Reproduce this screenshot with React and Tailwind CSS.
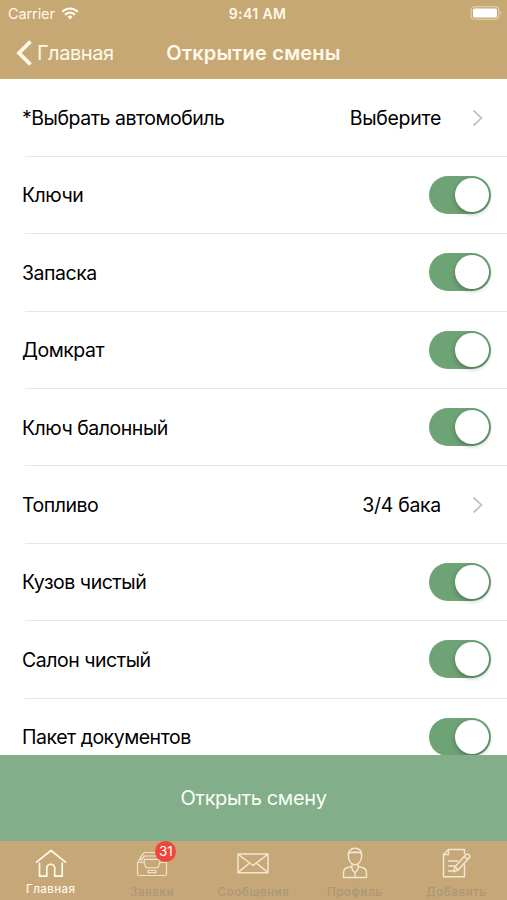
import React, { useState } from "react";
import clsx from "clsx";

const ROWS = [
    { label: "*Выбрать автомобиль", value: "Выберите" },
    { label: "Ключи" },
    { label: "Запаска" },
    { label: "Домкрат" },
    { label: "Ключ балонный" },
    { label: "Топливо", value: "3/4 бака" },
    { label: "Кузов чистый" },
    { label: "Салон чистый" },
    { label: "Пакет документов" },
];

// === Icons ===
const WifiIcon = () => (
    <svg width="18" height="13" viewBox="0 0 18 13" fill="none" stroke="#fffaf0" strokeWidth="2.1">
        <path d="M1.2 4.8C5.6.4 12.4.4 16.8 4.8" />
        <path d="M4 7.7c2.9-2.8 7.1-2.8 10 0" />
        <path d="M6.4 9.6a3.8 3.8 0 0 1 5.2 0L9 12.4z" fill="#fffaf0" stroke="none" />
    </svg>
);

const BatteryIcon = () => (
    <svg width="33" height="14" viewBox="0 0 33 14" fill="none">
        <rect x="1.2" y=".7" width="27.6" height="12.6" rx="3.2" stroke="#e3d3b4" strokeWidth="1.1" />
        <rect x="3" y="2.5" width="24" height="9" rx="1.5" fill="#fff" />
        <path d="M30.4 4.8c1.5.7 1.5 3.7 0 4.4z" fill="#e3d3b4" />
    </svg>
);

const HomeIcon = () => (
    <svg width="32" height="30" viewBox="0 0 32 30" fill="none" stroke="#fffaf0" strokeWidth="1.7" strokeLinecap="round" strokeLinejoin="round">
        <path d="M1.500 13.200 16 1.500l14.500 11.700" />
        <path d="M4.500 14v13.200h7.300v-8a3.700 3.700 0 0 1 7.900 0v8h7.500V14" />
    </svg>
);

const TrayIcon = () => (
    <svg width="32" height="26" viewBox="0 0 32 26" fill="none" stroke="#efe2ca" strokeWidth="1.200" strokeLinejoin="round" strokeLinecap="round">
        <path d="M1.500 11.500h5.800c.8 0 1.200.6 1.400 1.300l1 3c.2.700.6 1 1.300 1h10c.7 0 1.100-.3 1.300-1l1-3c.2-.7.6-1.300 1.400-1.300h5.800V23a1.500 1.500 0 0 1-1.500 1.500H3A1.500 1.500 0 0 1 1.500 23z" />
        <path d="M1.500 11.500 4.200 7.500M30.500 11.500l-2.700-4" />
        <path d="M4.200 9V6.500L8.500 1.500H25M5.800 10V8l2.800-3h15.800M8.300 10.700V8.300h15.400v2.400" />
        <path d="M12 19.500v2.200h8v-2.200M12 19.500h8" />
    </svg>
);

const MailIcon = () => (
    <svg width="32" height="21" viewBox="0 0 32 21" fill="none" stroke="#f3e7d3" strokeWidth="1.5" strokeLinejoin="round">
        <rect x="1" y="1" width="30" height="18.7" />
        <path d="m1.5 1.5 14.5 11 14.5-11M1.5 19.2l10.4-8.5M30.5 19.2l-10.4-8.5" />
    </svg>
);

const ProfileIcon = () => (
    <svg width="26" height="33" viewBox="0 0 26 33" fill="none" stroke="#f3e7d3" strokeWidth="1.4" strokeLinejoin="round" strokeLinecap="round">
        <path d="M6.3 8.2C6.3 3.7 9 1.2 13 1.2s6.700 2.500 6.700 7c0 6-3 9.500-6.700 9.500S6.300 14.200 6.300 8.200z" />
        <path d="M6.500 8c0-1.500 1-2.700 2.500-2.700h8c1.500 0 2.500 1.200 2.500 2.700M8 5.500h10" />
        <path d="M10 17v2.300L4.500 21C2.300 21.800 1.500 23.500 1.500 26v4.500h23V26c0-2.500-.8-4.200-3-5L16 19.300V17" />
        <path d="m9.500 19.500 1.200 4 2.300 2.300 2.300-2.300 1.200-4M13 26v4.500" />
    </svg>
);

const NoteIcon = () => (
    <svg width="30" height="31" viewBox="0 0 30 31" fill="none" stroke="#f3e7d3" strokeWidth="1.5" strokeLinejoin="round" strokeLinecap="round">
        <path d="M23.500 5.500v-4H7.500l-5 5v22.200h21V17" />
        <path d="M7.500 1.500v5h-5M7.500 13h9M7.500 18h6M7.500 23h4" />
        <path d="m12.500 23.700 1.500-5L25 6.500c1.500-1.500 4.800 1.300 3.300 3.100L17.200 22z" />
        <path d="m23.300 8.500 3.300 3M14 18.700l3.200 3.300" />
    </svg>
);

const TABS = [
    { label: "Главная", icon: <HomeIcon />, active: true },
    { label: "Заявки", icon: <TrayIcon />, badge: 31 },
    { label: "Сообщения", icon: <MailIcon /> },
    { label: "Профиль", icon: <ProfileIcon /> },
    { label: "Добавить", icon: <NoteIcon /> },
];

const Switch = () => {
    const [on, setOn] = useState(true);

    return (
        <button
            role="switch"
            aria-checked={on}
            onClick={() => setOn((prev) => !prev)}
            className={clsx(
                "flex h-[38px] w-[62px] items-center rounded-full px-0.5",
                on ? "justify-end bg-[#6da375]" : "justify-start bg-gray-200"
            )}
        >
            <span className="size-[34px] rounded-full bg-white shadow-[0_2px_5px_rgba(0,0,0,0.28)]" />
        </button>
    );
};

const Row = ({ label, value }) => (
    <div className="flex h-[77.4px] shrink-0 flex-col pl-[22px]">
        <div className="flex flex-1 items-center justify-between pr-4">
            <span className="pt-0.5">{label}</span>
            {value ? (
                <span className="flex items-center gap-[31px] pr-2">
                    <span className="pt-0.5 tracking-[-0.3px]">{value}</span>
                    <svg width="11" height="18" viewBox="0 0 11 18" fill="none" stroke="#c4c4c6" strokeWidth="1.8">
                        <path d="m1.500 1.500 8 7.500-8 7.500" />
                    </svg>
                </span>
            ) : (
                <Switch />
            )}
        </div>
        <div className="ml-[3px] h-px bg-[#e6e6e7]" />
    </div>
);

const App = () => {
    return (
        <main className="flex h-[900px] w-[507px] flex-col overflow-hidden bg-white font-['Inter',sans-serif] text-black">

            {/* Status bar + navigation */}
            <header className="h-[79px] shrink-0 bg-[#c6a875] text-[#fff8e9]">
                <div className="grid h-[27px] grid-cols-3 items-center pl-2 pr-1 text-[14.500px]">
                    <div className="flex items-center gap-[6px]">
                        <span className="tracking-[-0.1px]">Carrier</span>
                        <WifiIcon />
                    </div>
                    <span className="pl-1 text-center text-[14px] font-semibold tracking-[0.4px]">9:41 AM</span>
                    <div className="flex justify-end pb-0.5"><BatteryIcon /></div>
                </div>
                <div className="grid h-[51px] grid-cols-[1fr_auto_1fr] items-center px-4 text-[20px]">
                    <button className="flex items-center gap-[5px]">
                        <svg width="16" height="26" viewBox="0 0 16 26" fill="none" stroke="#fff8e9" strokeWidth="3.800">
                            <path d="M14.500 1.500 3 13l11.500 11.500" />
                        </svg>
                        <span className="tracking-[-0.45px]">Главная</span>
                    </button>
                    <h1 className="font-semibold tracking-[0.2px]">Открытие смены</h1>
                </div>
            </header>

            {/* Checklist */}
            <section className="flex h-[676px] shrink-0 flex-col overflow-hidden pt-[0.5px] text-[19.500px] tracking-[-0.48px]">
                {ROWS.map((row) => (
                    <Row key={row.label} {...row} />
                ))}
            </section>

            <button className="h-[86px] shrink-0 bg-[#82ae8a] text-[20px] tracking-[-0.35px] text-[#fbfff4]">
                Открыть смену
            </button>

            {/* Tab bar */}
            <nav className="grid flex-1 grid-cols-5 bg-[#c6a777]">
                {TABS.map(({ label, icon, active, badge }) => (
                    <div key={label} className="relative flex flex-col items-center">
                        <div className="flex h-[45px] items-center justify-center">{icon}</div>
                        <span
                            className={clsx(
                                "text-[11.500px] leading-3 font-medium",
                                active ? "-mt-[3px] tracking-[0.4px] text-[#fff8e9]" : "tracking-[0.65px] text-[#ab9679]"
                            )}
                        >
                            {label}
                        </span>
                        {badge && (
                            <span className="absolute left-[54px] top-0 flex size-[21px] items-center justify-center rounded-full bg-[#f0453a] text-[13.500px] text-white">
                                {badge}
                            </span>
                        )}
                    </div>
                ))}
            </nav>
        </main>
    );
};

export default App;
